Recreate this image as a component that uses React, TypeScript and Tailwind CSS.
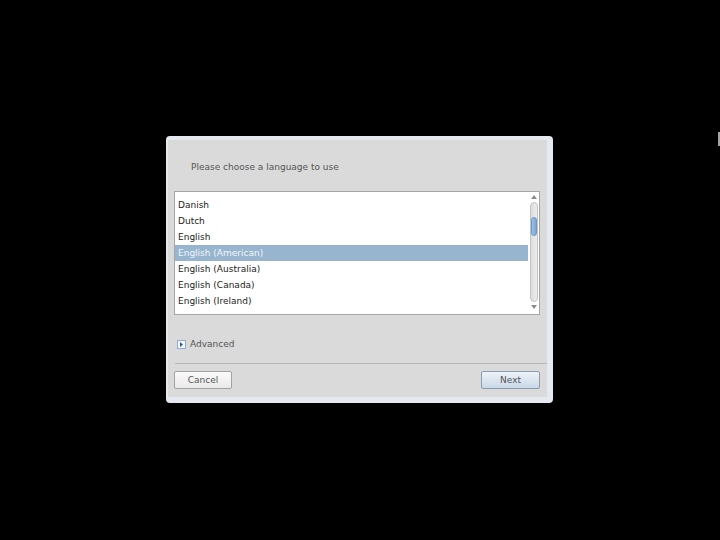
const languages = [
  "Danish",
  "Dutch",
  "English",
  "English (American)",
  "English (Australia)",
  "English (Canada)",
  "English (Ireland)",
];

const selected = "English (American)";

function Arrow({ dir }: { dir: "up" | "down" }) {
  return (
    <svg width="6" height="4" viewBox="0 0 6 4" className="block">
      {dir === "up" ? (
        <polygon points="0,4 6,4 3,0" fill="#8c8c8c" />
      ) : (
        <polygon points="0,0 6,0 3,4" fill="#8c8c8c" />
      )}
    </svg>
  );
}

function LanguageList() {
  return (
    <div className="flex h-[124px] w-[366px] border border-[#a6a6a6] bg-white">
      <div className="flex-1 pt-[5px]">
        {languages.map((lang) => (
          <div
            key={lang}
            className={[
              "h-[16px] pl-[3px] leading-[16px]",
              lang === selected ? "bg-[#97b5cf] text-[#f2f6fa]" : "text-[#1c1c1c]",
            ].join(" ")}
          >
            {lang}
          </div>
        ))}
      </div>
      <div className="flex w-[11px] flex-col items-center">
        <div className="flex h-[10px] items-center justify-center">
          <Arrow dir="up" />
        </div>
        <div className="relative h-[100px] w-[8px] rounded-full border border-[#c4c4c4] bg-gradient-to-r from-[#dedede] to-[#ececec]">
          <div className="absolute left-[0px] top-[14px] h-[19px] w-[6px] rounded-full border border-[#6e98c6] bg-gradient-to-r from-[#9cc0e6] to-[#7aa6d6]" />
        </div>
        <div className="flex h-[10px] items-center justify-center">
          <Arrow dir="down" />
        </div>
      </div>
    </div>
  );
}

function Expander() {
  return (
    <div className="flex h-[9px] w-[9px] items-center justify-center border border-[#8eaad6] bg-[#f4f7fc]">
      <svg width="3" height="5" viewBox="0 0 3 5" className="block">
        <polygon points="0,0 3,2.5 0,5" fill="#2a56a8" />
      </svg>
    </div>
  );
}

export default function App() {
  return (
    <div className="relative h-[540px] w-[720px] overflow-hidden bg-black pl-[166px] pt-[136px] font-['DejaVu_Sans',sans-serif] text-[9px]">
      <div className="h-[267px] w-[387px] rounded-[4px] border-b-[6px] border-l-2 border-r-[6px] border-t-4 border-[#e5eaf0]">
        <div className="flex h-full flex-col bg-[#dadada] px-[6px] pb-[8px] pt-[21px]">
          <p className="h-[12px] pl-[17px] leading-[12px] text-[#555555]">
            Please choose a language to use
          </p>

          <div className="mt-[18px]">
            <LanguageList />
          </div>

          <div className="mt-[23px] flex h-[12px] items-center pl-[3px]">
            <Expander />
            <span className="ml-[4px] leading-[12px] text-[#555555]">Advanced</span>
          </div>

          <div className="-mr-[6px] ml-[1px] mt-[13px] h-[2px] border-t border-[#b6b6b6] border-b-[#e8e8e8]" />

          <div className="mt-[6px] flex w-[366px] justify-between">
            <button
              type="button"
              className="h-[18px] w-[58px] rounded-[2px] border border-[#a2a2a2] bg-gradient-to-b from-[#fbfbfb] to-[#e9e9e9] leading-[16px] text-[#555555]"
            >
              Cancel
            </button>
            <button
              type="button"
              className="h-[18px] w-[59px] rounded-[2px] border border-[#8c9cad] bg-gradient-to-b from-[#edf3f9] to-[#c9d8e7] leading-[16px] text-[#555555]"
            >
              Next
            </button>
          </div>
        </div>
      </div>

      <div className="absolute left-[718px] top-[132px] h-[14px] w-[2px] bg-[#a4a4a4]" />
    </div>
  );
}
